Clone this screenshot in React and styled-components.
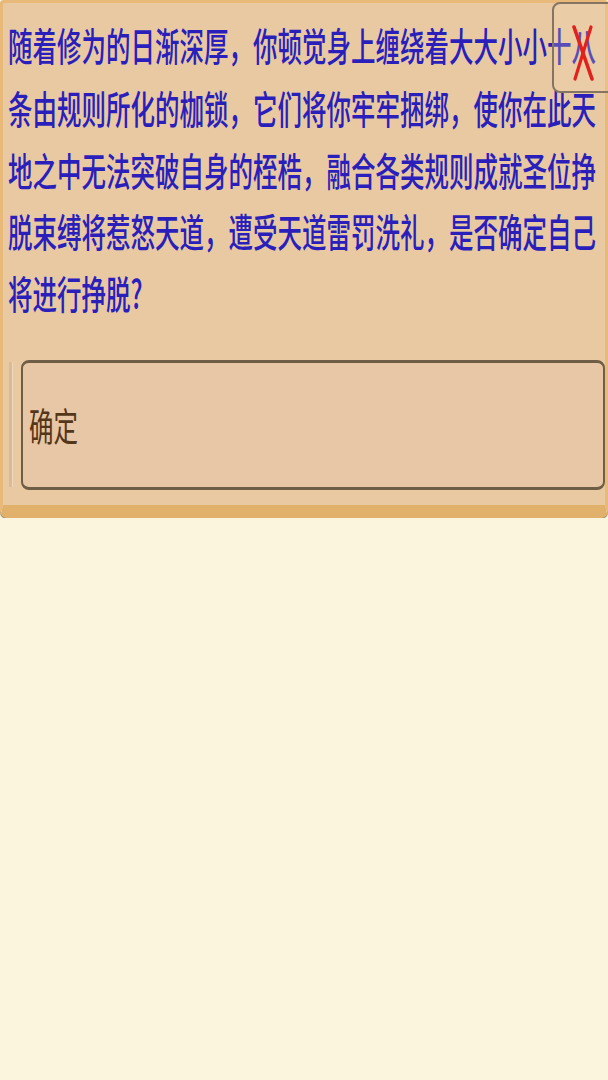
import React from 'react';
import styled, { createGlobalStyle } from 'styled-components';

const GlobalStyle = createGlobalStyle`
  html, body {
    margin: 0;
    padding: 0;
    background: #fcf5dd;
  }
  body {
    font-family: "Noto Sans CJK SC", "Noto Sans", sans-serif;
  }
`;

const message =
  '随着修为的日渐深厚，你顿觉身上缠绕着大大小小十八条由规则所化的枷锁，它们将你牢牢捆绑，使你在此天地之中无法突破自身的桎梏，融合各类规则成就圣位挣脱束缚将惹怒天道，遭受天道雷罚洗礼，是否确定自己将进行挣脱?';

const App = () => {
  return (
    <>
      <GlobalStyle />
      <Panel>
        <Message>
          <Squash>{message}</Squash>
        </Message>
        <ButtonRow>
          <Rail />
          <ConfirmButton>
            <Label>确定</Label>
          </ConfirmButton>
        </ButtonRow>
        <CloseButton aria-label="关闭">
          <svg width="24" height="56" viewBox="0 0 24 56">
            <line x1="3" y1="2" x2="21" y2="54" stroke="#e3211c" strokeWidth="3.6" strokeLinecap="round" />
            <line x1="20" y1="2" x2="4" y2="54" stroke="#e3211c" strokeWidth="3.2" strokeLinecap="round" />
          </svg>
        </CloseButton>
      </Panel>
    </>
  );
};

const Panel = styled.div`
  position: relative;
  box-sizing: border-box;
  width: 608px;
  height: 518px;
  padding: 12px 0 15px 5px;
  background: #e9c9a2;
  border: 3px solid #e8b978;
  border-bottom: 13px solid #e1b16b;
  border-radius: 4px 4px 7px 7px;
  box-shadow: 0 1px 1px rgba(70, 50, 20, 0.6);
  display: flex;
  flex-direction: column;
  gap: 35px;
`;

const Message = styled.div`
  height: 310px;
  width: 592px;
`;

const Squash = styled.p`
  margin: 0;
  font-size: 24.5px;
  font-weight: 500;
  line-height: 38.75px;
  color: #2a1fba;
  transform: scaleY(1.6);
  transform-origin: top left;
`;

const ButtonRow = styled.div`
  display: flex;
  align-items: stretch;
  gap: 8px;
  height: 130px;
`;

const Rail = styled.div`
  width: 3px;
  margin: 2px 0 3px 1px;
  background: #d8bc9a;
  border-right: 1px solid #efd7b8;
`;

const ConfirmButton = styled.div`
  flex: 1;
  display: flex;
  align-items: center;
  padding-left: 6px;
  background: #e7c7a5;
  border: 2px solid #6f5d45;
  border-top-width: 3px;
  border-bottom-width: 3px;
  border-radius: 8px;
`;

const Label = styled.span`
  display: inline-block;
  font-size: 24.5px;
  line-height: 1;
  color: #54361a;
  transform: scaleY(1.6);
`;

const CloseButton = styled.div`
  position: absolute;
  top: -1px;
  left: 549px;
  width: 64px;
  height: 91px;
  box-sizing: border-box;
  border: 2px solid #857462;
  border-radius: 8px;
  background: rgba(240, 214, 178, 0.25);
  padding: 21px 0 0 17px;
`;

export default App;
